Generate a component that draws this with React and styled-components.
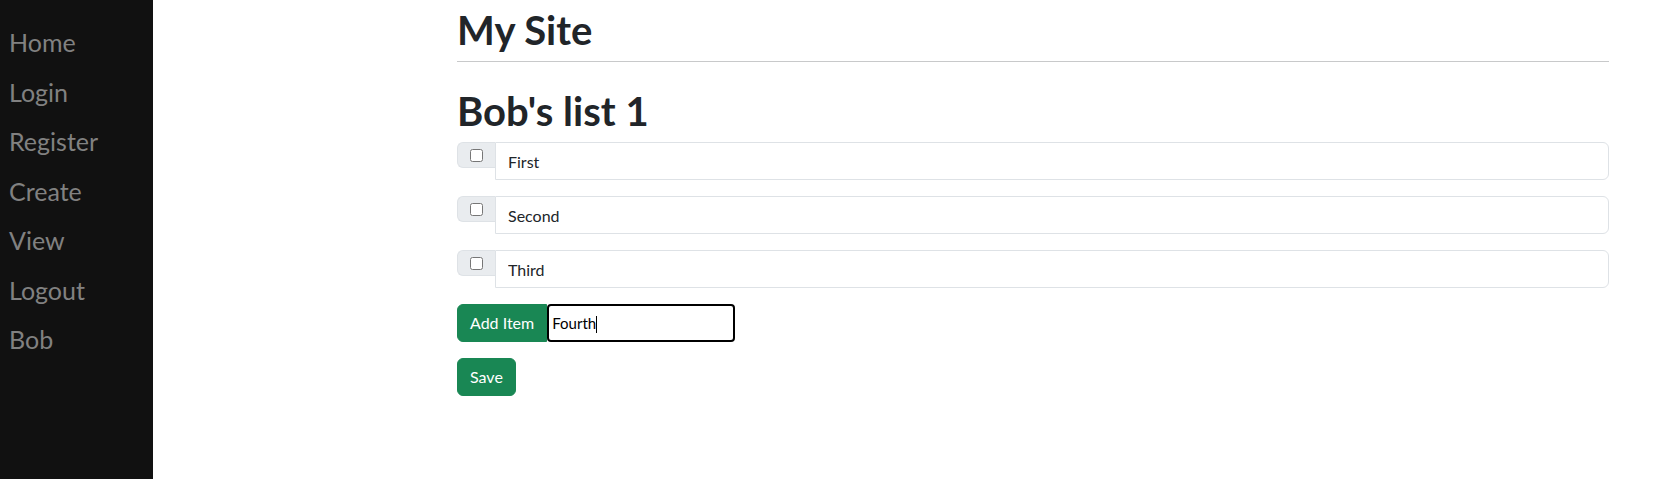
import React from "react";
import styled, { createGlobalStyle } from "styled-components";

const GlobalStyle = createGlobalStyle`
  * { box-sizing: border-box; }
  html, body { margin: 0; padding: 0; background: #fff; }
  body {
    font-family: Lato, "Noto Sans", sans-serif;
    color: #212529;
    font-size: 16px;
    line-height: 1.5;
  }
`;

const Layout = styled.div`
  display: flex;
  min-height: 100vh;
`;

const Sidebar = styled.nav`
  width: 153px;
  flex: 0 0 153px;
  background: #111;
  padding-top: 18px;
  display: flex;
  flex-direction: column;
`;

const NavLink = styled.a`
  display: block;
  padding: 6px 8px 6px 9px;
  font-size: 25px;
  line-height: 1.5;
  color: #818181;
  text-decoration: none;
  cursor: pointer;
`;

const Main = styled.main`
  flex: 1;
  padding: 6px 52px 0 304px;
`;

const SiteTitle = styled.h1`
  margin: 0 0 7px;
  font-size: 40px;
  font-weight: 700;
  line-height: 48px;
`;

const Rule = styled.hr`
  margin: 0;
  border: 0;
  border-top: 1px solid #c8c9ca;
`;

const ListTitle = styled.h1`
  margin: 25px 0 7px;
  font-size: 40px;
  font-weight: 700;
  line-height: 48px;
`;

const ItemRow = styled.div`
  display: flex;
  align-items: flex-start;
  margin-bottom: 16px;
`;

const CheckAddon = styled.div`
  width: 38px;
  height: 26px;
  flex: 0 0 38px;
  display: flex;
  align-items: center;
  justify-content: center;
  background: #e9ecef;
  border: 1px solid #dee2e6;
  border-right: 0;
  border-radius: 6px 0 0 6px;
`;

const Check = styled.input`
  margin: 0;
  width: 13px;
  height: 13px;
`;

const ItemInput = styled.input`
  flex: 1;
  height: 38px;
  padding: 6px 12px;
  font: inherit;
  font-size: 16px;
  color: #212529;
  border: 1px solid #dee2e6;
  border-radius: 0 6px 6px 0;
  background: #fff;
  outline: none;
`;

const AddRow = styled.div`
  display: flex;
  margin-bottom: 16px;
`;

const Button = styled.button`
  height: 38px;
  padding: 6px 12px;
  font: inherit;
  font-size: 16px;
  line-height: 1.5;
  color: #fff;
  background: #198754;
  border: 1px solid #198754;
  border-radius: ${(p) => (p.$joined ? "6px 0 0 6px" : "6px")};
  cursor: pointer;
`;

const NewItemWrap = styled.span`
  position: relative;
  display: inline-block;
`;

const NewItemInput = styled.input`
  width: 188px;
  height: 38px;
  padding: 0 3px;
  font-family: Lato, "Noto Sans", sans-serif;
  font-size: 15px;
  color: #000;
  border: 2px solid #000;
  border-radius: 4px;
  background: #fff;
  outline: none;
  caret-color: transparent;
`;

const Caret = styled.span`
  position: absolute;
  left: 49px;
  top: 12px;
  width: 1px;
  height: 17px;
  background: #000;
  pointer-events: none;
`;

const links = ["Home", "Login", "Register", "Create", "View", "Logout", "Bob"];
const items = ["First", "Second", "Third"];

export default function App() {
  return (
    <>
      <GlobalStyle />
      <Layout>
        <Sidebar>
          {links.map((l) => (
            <NavLink key={l}>{l}</NavLink>
          ))}
        </Sidebar>
        <Main>
          <SiteTitle>My Site</SiteTitle>
          <Rule />
          <ListTitle>Bob's list 1</ListTitle>
          {items.map((it) => (
            <ItemRow key={it}>
              <CheckAddon>
                <Check type="checkbox" />
              </CheckAddon>
              <ItemInput type="text" defaultValue={it} />
            </ItemRow>
          ))}
          <AddRow>
            <Button $joined>Add Item</Button>
            <NewItemWrap>
              <NewItemInput type="text" defaultValue="Fourth" />
              <Caret />
            </NewItemWrap>
          </AddRow>
          <Button>Save</Button>
        </Main>
      </Layout>
    </>
  );
}
